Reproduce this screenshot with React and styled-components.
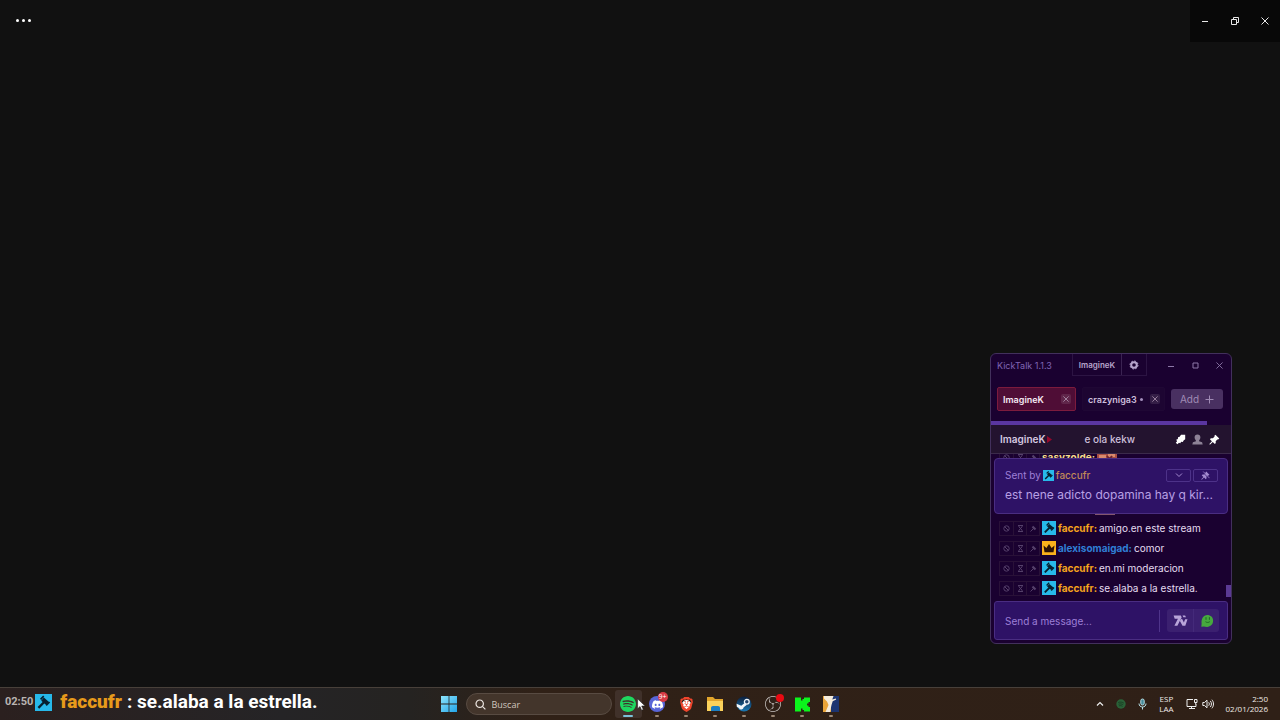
import React from "react";
import styled, { createGlobalStyle } from "styled-components";
import { SiSpotify, SiDiscord, SiBrave, SiObsstudio } from "react-icons/si";

const messages = [
  { user: "faccufr", color: "#f5a31c", badge: "mod", text: "amigo.en este stream" },
  { user: "alexisomaigad", color: "#2f7fd6", badge: "crown", text: "comor" },
  { user: "faccufr", color: "#f5a31c", badge: "mod", text: "en.mi moderacion" },
  { user: "faccufr", color: "#f5a31c", badge: "mod", text: "se.alaba a la estrella." },
];

const HammerBadge = ({ size }) => (
  <svg width={size} height={size} viewBox="0 0 14 14">
    <rect width="14" height="14" fill="#27b9ea" />
    <path d="m6.200 4.200 4.200 3.600" stroke="#06202f" strokeWidth="3.400" />
    <path d="m4.600 4.400 2.600-2.600M9.200 9.400l2.800-2.800" stroke="#06202f" strokeWidth="1.400" />
    <path d="m7.800 6.400-5 5" stroke="#06202f" strokeWidth="1.900" />
  </svg>
);

const CrownBadge = ({ size }) => (
  <svg width={size} height={size} viewBox="0 0 14 14">
    <rect width="14" height="14" fill="#fbb21c" />
    <path d="M1.500 4.500 4.400 7 7 3l2.600 4 2.900-2.500-1 6.700h-9z" fill="#2b1206" />
  </svg>
);

const GearIcon = () => (
  <svg width="10" height="10" viewBox="0 0 10 10">
    <circle cx="5" cy="5" r="2.8" fill="none" stroke="#b7a5cc" strokeWidth="2" />
    <circle cx="5" cy="5" r="4" fill="none" stroke="#b7a5cc" strokeWidth="1" strokeDasharray="1.7 1.4" />
  </svg>
);

const CloseIcon = ({ size = 6 }) => (
  <svg width={size} height={size} viewBox="0 0 8 8" fill="none" stroke="currentColor" strokeWidth="1">
    <path d="m.5.5 7 7M7.5.5l-7 7" />
  </svg>
);

const MinimizeIcon = () => (
  <svg width="8" height="8" viewBox="0 0 8 8" fill="none" stroke="currentColor">
    <path d="M1 4.5h6" />
  </svg>
);

const MaximizeIcon = () => (
  <svg width="7" height="7" viewBox="0 0 7 7" fill="none" stroke="currentColor">
    <path d="M1 1h5v5H1z" />
  </svg>
);

const RestoreIcon = () => (
  <svg width="8" height="8" viewBox="0 0 8 8" fill="none" stroke="currentColor">
    <path d="M.5 2.5h5v5h-5zM2.5 2V.5h5v5H6" />
  </svg>
);

const PlusIcon = () => (
  <svg width="9" height="9" viewBox="0 0 9 9" fill="none" stroke="currentColor">
    <path d="M4.5.5v8M.5 4.5h8" />
  </svg>
);

const BanIcon = () => (
  <svg width="7" height="7" viewBox="0 0 7 7" fill="none" stroke="currentColor">
    <circle cx="3.5" cy="3.5" r="2.7" />
    <path d="m1.7 1.7 3.6 3.6" />
  </svg>
);

const HourglassIcon = () => (
  <svg width="7" height="7" viewBox="0 0 7 7" fill="none" stroke="currentColor">
    <path d="M1 .5h5M1 6.5h5M2 .5v1.3l3 3.4v1.3M5 .5v1.3L2 5.2v1.3" />
  </svg>
);

const GavelIcon = () => (
  <svg width="7" height="7" viewBox="0 0 7 7" fill="none" stroke="currentColor">
    <path d="m2.500 1.500 3 3" strokeWidth="2.200" />
    <path d="m4 3-3.500 3.500" />
  </svg>
);

const PinIcon = ({ size, off }) => (
  <svg width={size} height={size} viewBox="0 0 12 12" fill="currentColor">
    <path d="M7 .8 11.2 5 10 6l-.9-.1-1.8 1.9.1 2-1 1.1-2.3-2.3L1 11.6l-.6-.6L3.200 7.900 1 5.600l1.100-1 2 .1L6 2.900 5.900 2z" />
    {off && <path d="m2 1 9 9.500" stroke="#35176f" strokeWidth="1.200" />}
    {off && <path d="m3 .7 8.300 8.800" stroke="currentColor" />}
  </svg>
);

const SpearIcon = () => (
  <svg width="11" height="11" viewBox="0 0 11 11" fill="#fff">
    <path d="M6 .8h4.200v4.400L8.600 6.600 7.800 8 6.200 7.800 5.200 9.300 4 8.700 2.400 10.300.8 8.700l1.300-1.500-.9-1.400 1.700-.9.1-1.600 1.700-.5z" />
  </svg>
);

const PersonIcon = () => (
  <svg width="11" height="11" viewBox="0 0 11 11" fill="#8d8296">
    <path d="M5.500.4c1.900 0 2.900 1.200 2.900 2.900 0 1.400-.6 2.500-1.300 3.100v.8l3 1.100.6 2.100H.3l.6-2.100 3-1.100v-.8C3.200 5.800 2.600 4.700 2.600 3.300 2.600 1.600 3.600.4 5.500.4z" />
  </svg>
);

const ChevronIcon = () => (
  <svg width="8" height="6" viewBox="0 0 8 6" fill="none" stroke="currentColor">
    <path d="m1 1.500 3 3 3-3" />
  </svg>
);

const SevenTvIcon = () => (
  <svg width="15" height="12" viewBox="0 0 15 12" fill="#b9a5d9">
    <path d="M.6.600h7.200l.9 1.700-4.300 8.500H1.400l3.500-7H1.700z" />
    <path d="M9.500.6h2.600l.9 1.700h-2.600zM7.600 4.600 9 3.800l1.900 3.700 1.200-3.200h2.400l-2.200 6.500H9.500L6.900 6z" />
  </svg>
);

const EmojiIcon = () => (
  <svg width="14" height="14" viewBox="0 0 14 14">
    <path d="M7.300.9c3.300 0 5.800 2.200 5.800 5.700 0 3.900-2.500 6.300-6 6.300-1.400 0-2.400-.3-3.200-.5l-2.600.4.300-3C1.100 4.500 3.400.9 7.300.9z" fill="#46a83e" />
    <path d="M6 3.200v2.600M9.400 3.200v2.600M5.500 7.700c1.300 1 3 1 4.300 0" fill="none" stroke="#1f6725" />
  </svg>
);

const EmoteIcon = () => (
  <svg width="20" height="20" viewBox="0 0 20 20">
    <rect width="20" height="20" fill="#a84f43" />
    <path d="M2 8h7v4H2zM11 4h7v6h-7z" fill="#d98a6c" />
    <path d="m10 9 4 5M15 9l-4 5" stroke="#6b2430" strokeWidth="2" />
    <path d="M0 18h20v2H0z" fill="#84566e" />
  </svg>
);

const WindowsIcon = () => (
  <svg width="16" height="16" viewBox="0 0 16 16">
    <defs>
      <linearGradient id="win" x1="0" y1="0" x2="1" y2="1">
        <stop offset="0" stopColor="#8de4fb" />
        <stop offset="1" stopColor="#22a5ea" />
      </linearGradient>
    </defs>
    <path d="M0 0h7.600v7.600H0zM8.400 0H16v7.600H8.400zM0 8.400h7.600V16H0zM8.400 8.400H16V16H8.400z" fill="url(#win)" />
  </svg>
);

const SearchIcon = () => (
  <svg width="11" height="11" viewBox="0 0 11 11" fill="none" stroke="#eee7e2" strokeWidth="1.200">
    <circle cx="4.700" cy="4.700" r="3.700" />
    <path d="m7.400 7.400 3 3" />
  </svg>
);

const FolderIcon = () => (
  <svg width="18" height="16" viewBox="0 0 18 16">
    <path d="M1 1h6l2 2h8v12H1z" fill="#e2a52c" />
    <path d="M1 5h16v10H1z" fill="#fbd25c" />
    <path d="M5 15v-3c0-1.200.8-2 2-2h5c1.200 0 2 .8 2 2v3z" fill="#1c7fc4" />
  </svg>
);

const SteamIcon = () => (
  <svg width="16" height="16" viewBox="0 0 16 16">
    <defs>
      <linearGradient id="steam" x1="0" y1="0" x2="0" y2="1">
        <stop offset="0" stopColor="#0c1f3d" />
        <stop offset="1" stopColor="#1b79b4" />
      </linearGradient>
    </defs>
    <circle cx="8" cy="8" r="7.500" fill="url(#steam)" />
    <path d="m.6 7.700 4.700 2 3-2.500 2.600 1.500-3.200 2.600a2.500 2.500 0 0 1-4.800.6L.8 10.700z" fill="#f2f6fa" />
    <circle cx="10.800" cy="5.800" r="2.400" fill="#23456c" stroke="#f2f6fa" strokeWidth="1.300" />
  </svg>
);

const KickIcon = () => (
  <svg width="17" height="15" viewBox="0 0 17 15">
    <path d="M1 .5h6v3h1.500V2H10V.5h6V5h-1.500v1.500H13v2h1.500V10H16v4.500h-6V13H8.500v-1.500H7v3H1z" fill="#0bf51c" />
  </svg>
);

const CounterStrikeIcon = () => (
  <svg width="16" height="16" viewBox="0 0 16 16">
    <rect width="16" height="16" fill="#e9a53a" />
    <path d="M8 0h8v16H8z" fill="#1c3470" />
    <path d="M1 0h9.500L9.300 3.400l3.500-1 .4 1.200-3.500 1.700L8.500 9 7 16H2.500L5.500 9 4 5.500 1 2.500z" fill="#f4ecdd" />
  </svg>
);

const CursorIcon = () => (
  <svg width="9" height="13" viewBox="0 0 9 13">
    <path d="M.6.8v10l2.400-2.200 1.600 3.700 1.700-.8-1.600-3.500h3.400z" fill="#fff" stroke="#222" strokeWidth=".6" />
  </svg>
);

const TrayUpIcon = () => (
  <svg width="8" height="6" viewBox="0 0 8 6" fill="none" stroke="#eee" strokeWidth="1.200">
    <path d="m1 4.500 3-3 3 3" />
  </svg>
);

const TrayGreenIcon = () => (
  <svg width="10" height="10" viewBox="0 0 10 10">
    <circle cx="5" cy="5" r="4.700" fill="#2a6238" />
    <path d="M2.200 3.500c2-.8 4.200-.4 5.600.6M2.500 5.200c1.700-.6 3.400-.3 4.700.5M2.800 6.900c1.400-.5 2.700-.2 3.800.4" fill="none" stroke="#14301b" strokeWidth=".7" />
  </svg>
);

const MicIcon = () => (
  <svg width="9" height="12" viewBox="0 0 9 12" fill="none" stroke="#b8dfe5">
    <rect x="2.800" y="1" width="3.400" height="6" rx="1.700" fill="#438a9a" />
    <path d="M1 5.500C1 7.700 2.500 9 4.500 9S8 7.700 8 5.500M4.500 9v2.500" />
  </svg>
);

const NetworkIcon = () => (
  <svg width="12" height="12" viewBox="0 0 12 12" fill="none" stroke="#eee">
    <path d="M7 1.500H1v7h9V6M3 10.500h6M5.500 8.500v2M8.500 1.500h2.500v3H8.500zM9.700 4.500v2" />
  </svg>
);

const SpeakerIcon = () => (
  <svg width="12" height="10" viewBox="0 0 12 10" fill="none" stroke="#eee">
    <path d="M.8 3.500h1.700L5 1.200v7.600L2.500 6.500H.8zM6.700 3.300c.8 1 .8 2.400 0 3.400M8.300 1.900c1.500 1.800 1.500 4.400 0 6.200M9.900.7c2.100 2.400 2.100 6.200 0 8.600" />
  </svg>
);

const ModTools = () => (
  <ModButtons>
    <button type="button" aria-label="Ban"><BanIcon /></button>
    <button type="button" aria-label="Timeout"><HourglassIcon /></button>
    <button type="button" aria-label="Moderate"><GavelIcon /></button>
  </ModButtons>
);

const KickTalk = () => (
  <ChatWindow>
    <TitleBar>
      <AppName>KickTalk 1.1.3</AppName>
      <TitleGroup>
        <button type="button">ImagineK</button>
        <button type="button" aria-label="Settings"><GearIcon /></button>
      </TitleGroup>
      <WindowButtons>
        <button type="button" aria-label="Minimize"><MinimizeIcon /></button>
        <button type="button" aria-label="Maximize"><MaximizeIcon /></button>
        <button type="button" aria-label="Close"><CloseIcon size={7} /></button>
      </WindowButtons>
    </TitleBar>
    <Tabs>
      <Tab $active>
        <button type="button">ImagineK</button>
        <TabClose type="button" aria-label="Close ImagineK"><CloseIcon /></TabClose>
      </Tab>
      <Tab>
        <button type="button">crazyniga3 <i /></button>
        <TabClose type="button" aria-label="Close crazyniga3"><CloseIcon /></TabClose>
      </Tab>
      <AddButton type="button">Add <PlusIcon /></AddButton>
    </Tabs>
    <TabScroll><span /></TabScroll>
    <StreamHeader>
      <h2>ImagineK</h2>
      <LiveDot viewBox="0 0 5 7"><path d="M0 0 5 3.500 0 7z" fill="#94082b" /></LiveDot>
      <p>e ola kekw</p>
      <SpearIcon />
      <PersonIcon />
      <PinIcon size={11} />
    </StreamHeader>
    <Chat>
      <Message>
        <ModTools />
        <Name $color="#f3dc8c">sasyzolde:</Name>
        <EmoteIcon />
      </Message>
      <EmoteMessage><EmoteIcon /></EmoteMessage>
      {messages.map((m, i) => (
        <Message key={i}>
          <ModTools />
          {m.badge === "mod" ? <HammerBadge size={14} /> : <CrownBadge size={14} />}
          <Name $color={m.color}>{m.user}:</Name>
          <span>{m.text}</span>
        </Message>
      ))}
      <ScrollThumb />
      <Pinned>
        <PinnedTop>
          <span>Sent by</span>
          <HammerBadge size={11} />
          <strong>faccufr</strong>
          <SmallButton type="button" aria-label="Expand"><ChevronIcon /></SmallButton>
          <SmallButton type="button" aria-label="Unpin"><PinIcon size={9} off /></SmallButton>
        </PinnedTop>
        <p>est nene adicto dopamina hay q kir...</p>
      </Pinned>
    </Chat>
    <Composer>
      <input type="text" aria-label="Message" placeholder="Send a message..." />
      <EmoteButtons>
        <button type="button" aria-label="7TV emotes"><SevenTvIcon /></button>
        <button type="button" aria-label="Kick emotes"><EmojiIcon /></button>
      </EmoteButtons>
    </Composer>
  </ChatWindow>
);

const App = () => {
  return (
    <Desktop>
      <GlobalStyle />
      <TopBar>
        <MoreButton type="button" aria-label="More"><i /><i /><i /></MoreButton>
        <Controls>
          <button type="button" aria-label="Minimize"><MinimizeIcon /></button>
          <button type="button" aria-label="Restore"><RestoreIcon /></button>
          <button type="button" aria-label="Close"><CloseIcon size={8} /></button>
        </Controls>
      </TopBar>
      <KickTalk />
      <Taskbar>
        <Overlay>
          <time>02:50</time>
          <HammerBadge size={17} />
          <b>faccufr</b>
          <span>: se.alaba a la estrella.</span>
        </Overlay>
        <Apps>
          <StartButton type="button" aria-label="Start"><WindowsIcon /></StartButton>
          <Search>
            <SearchIcon />
            <input type="text" aria-label="Buscar" placeholder="Buscar" />
          </Search>
          <AppButton type="button" aria-label="Spotify" $active>
            <SiSpotify size={16} color="#1ed760" />
            <Cursor><CursorIcon /></Cursor>
          </AppButton>
          <AppButton type="button" aria-label="Discord">
            <DiscordTile><SiDiscord size={11} color="#fff" /></DiscordTile>
            <Badge>9+</Badge>
          </AppButton>
          <AppButton type="button" aria-label="Brave">
            <BraveTile><SiBrave size={15} color="#f0452c" /></BraveTile>
          </AppButton>
          <AppButton type="button" aria-label="Archivos"><FolderIcon /></AppButton>
          <AppButton type="button" aria-label="Steam"><SteamIcon /></AppButton>
          <AppButton type="button" aria-label="OBS">
            <SiObsstudio size={16} color="#c9c5c3" />
            <RecordDot />
          </AppButton>
          <AppButton type="button" aria-label="Kick"><KickIcon /></AppButton>
          <AppButton type="button" aria-label="Counter-Strike 2"><CounterStrikeIcon /></AppButton>
        </Apps>
        <Tray>
          <TrayUpIcon />
          <TrayGreenIcon />
          <MicIcon />
          <Language>ESP<br />LAA</Language>
          <Sound><NetworkIcon /><SpeakerIcon /></Sound>
          <Clock>2:50<br />02/01/2026</Clock>
        </Tray>
      </Taskbar>
    </Desktop>
  );
};

const GlobalStyle = createGlobalStyle`
  * {
    box-sizing: border-box;
    margin: 0;
    padding: 0;
  }
  body {
    background: #111111;
    font-family: Inter, "Liberation Sans", sans-serif;
  }
  button, input {
    font: inherit;
    color: inherit;
    background: none;
    border: none;
    outline: none;
  }
  button {
    display: flex;
    align-items: center;
    justify-content: center;
  }
  svg {
    flex-shrink: 0;
    display: block;
  }
`;

const Desktop = styled.main`
  position: relative;
  display: flex;
  flex-direction: column;
  justify-content: space-between;
  min-height: 100vh;
  overflow: hidden;
`;

const TopBar = styled.header`
  display: flex;
  justify-content: space-between;
  align-items: flex-start;
`;

const MoreButton = styled.button`
  gap: 3px;
  height: 41px;
  padding: 0 16px;
  i {
    width: 3px;
    height: 3px;
    border-radius: 50%;
    background: #fff;
  }
`;

const Controls = styled.div`
  display: flex;
  height: 42px;
  background: #080808;
  color: #e8e8e8;
  button {
    width: 30px;
    height: 41px;
  }
`;

const ChatWindow = styled.section`
  position: absolute;
  right: 48px;
  bottom: 76px;
  display: flex;
  flex-direction: column;
  width: 242px;
  border: 1px solid #42305c;
  border-radius: 6px;
  overflow: hidden;
  background: #1a0130;
  color: #d9cce8;
  font-size: 10px;
`;

const TitleBar = styled.div`
  display: flex;
  align-items: flex-start;
  height: 33px;
`;

const AppName = styled.h1`
  flex: 1;
  padding-left: 6px;
  font-size: 9px;
  font-weight: 400;
  line-height: 23px;
  color: #8065b4;
`;

const TitleGroup = styled.div`
  display: flex;
  height: 22px;
  border: 1px solid #2c1443;
  border-top: none;
  color: #b7a5cc;
  font-size: 8px;
  font-weight: 600;
  button {
    width: 24px;
  }
  button:first-child {
    width: 49px;
    border-right: 1px solid #3a2351;
  }
`;

const WindowButtons = styled.div`
  display: flex;
  padding-left: 12px;
  color: #8d78a8;
  button {
    width: 24px;
    height: 23px;
  }
`;

const Tabs = styled.nav`
  display: flex;
  align-items: center;
  gap: 6px;
  padding: 0 8px 0 6px;
  height: 24px;
`;

const Tab = styled.div`
  display: flex;
  flex: ${({ $active }) => ($active ? "0 0 79px" : "1")};
  align-items: center;
  justify-content: space-between;
  height: 24px;
  padding: 0 4px 0 5px;
  border: 1px solid ${({ $active }) => ($active ? "#7c1b3d" : "#1f0734")};
  border-radius: 2px;
  background: ${({ $active }) => ($active ? "#4f0d36" : "#1d0532")};
  color: ${({ $active }) => ($active ? "#f5e8f2" : "#cdbfdb")};
  font-weight: 600;
  font-size: 9px;
  i {
    width: 3px;
    height: 3px;
    margin-left: 3px;
    border-radius: 50%;
    background: #a48fbd;
  }
`;

const TabClose = styled.button`
  width: 10px;
  height: 10px;
  border-radius: 2px;
  background: rgba(255, 255, 255, 0.1);
  color: #b79cb8;
`;

const AddButton = styled.button`
  gap: 6px;
  width: 52px;
  height: 20px;
  border-radius: 3px;
  background: #493061;
  color: #a08bb5;
  font-size: 10px;
`;

const TabScroll = styled.div`
  height: 14px;
  padding-top: 10px;
  span {
    display: block;
    width: 90%;
    height: 4px;
    background: #5a36a0;
  }
`;

const StreamHeader = styled.div`
  display: flex;
  align-items: center;
  gap: 6px;
  height: 29px;
  padding: 0 11px 0 9px;
  background: #23132f;
  border-bottom: 1px solid #3b2a4b;
  font-size: 10px;
  color: #fff;
  h2 {
    font-size: 10px;
    font-weight: 600;
    color: #d6c9e0;
  }
  p {
    flex: 1;
    padding-left: 26px;
    font-weight: 500;
    color: #cdbfdb;
  }
`;

const LiveDot = styled.svg`
  width: 5px;
  height: 7px;
  margin-left: -4px;
`;

const Chat = styled.div`
  position: relative;
  display: flex;
  flex-direction: column;
  justify-content: flex-end;
  height: 146px;
  padding: 0 8px 2px;
  overflow: hidden;
`;

const Message = styled.div`
  display: flex;
  flex-shrink: 0;
  align-items: center;
  gap: 2px;
  height: 20px;
  color: #e5dcf0;
  font-size: 10px;
  white-space: nowrap;
`;

const EmoteMessage = styled.div`
  display: flex;
  flex-shrink: 0;
  align-items: flex-end;
  height: 51px;
  padding: 0 0 3px 96px;
`;

const Name = styled.b`
  color: ${({ $color }) => $color};
  font-weight: 700;
`;

const ModButtons = styled.div`
  display: flex;
  border: 1px solid #291138;
  color: #55406a;
  button {
    width: 13px;
    height: 13px;
  }
  button + button {
    border-left: 1px solid #291138;
  }
`;

const ScrollThumb = styled.div`
  position: absolute;
  right: 0;
  bottom: 3px;
  width: 5px;
  height: 12px;
  background: #5b3a94;
`;

const Pinned = styled.aside`
  position: absolute;
  top: 4px;
  left: 3px;
  right: 3px;
  height: 56px;
  padding: 9px 9px 0 10px;
  border: 1px solid #4a2d82;
  border-radius: 4px;
  background: #2e1266;
  p {
    margin-top: 5px;
    white-space: nowrap;
    font-size: 12px;
    line-height: 16px;
    color: #b8a0e4;
  }
`;

const PinnedTop = styled.div`
  display: flex;
  align-items: center;
  gap: 2px;
  height: 14px;
  color: #9d7fd6;
  strong {
    flex: 1;
    font-weight: 500;
    color: #c08858;
  }
`;

const SmallButton = styled.button`
  width: 25px;
  height: 13px;
  border: 1px solid #4d3289;
  border-radius: 2px;
  color: #a48bd0;
`;

const Composer = styled.form`
  display: flex;
  align-items: center;
  gap: 7px;
  height: 39px;
  margin: 1px 3px 3px;
  padding: 0 8px 0 10px;
  border: 1px solid #4a2d82;
  border-radius: 3px;
  background: #2e1266;
  input {
    flex: 1;
    min-width: 0;
    height: 22px;
    border-right: 1px solid #4f348b;
    font-size: 10px;
    color: #b8a0e4;
  }
  input::placeholder {
    color: #9d7fd6;
  }
`;

const EmoteButtons = styled.div`
  display: flex;
  height: 23px;
  border-radius: 3px;
  background: #3b2070;
  button {
    width: 26px;
  }
  button + button {
    border-left: 1px solid #442a7a;
  }
`;

const Taskbar = styled.footer`
  display: grid;
  grid-template-columns: 1fr auto 1fr;
  align-items: center;
  height: 33px;
  border-top: 1px solid #48403a;
  background: linear-gradient(90deg, #2b201f 0, #252426 22%, #252321 32%, #302117 42%, #2f2017 100%);
  font-family: "Open Sans", "Noto Sans", sans-serif;
`;

const Overlay = styled.div`
  display: flex;
  align-items: center;
  padding: 0 0 4px 5px;
  font-family: Roboto, sans-serif;
  font-size: 19px;
  font-weight: 700;
  line-height: 24px;
  color: #fff;
  white-space: nowrap;
  time {
    margin-right: 2px;
    font-size: 11px;
    color: #b9b4b1;
  }
  b {
    margin: 0 5px 0 8px;
    color: #e79a1b;
  }
`;

const Apps = styled.div`
  display: flex;
  align-items: center;
  padding-right: 2px;
`;

const StartButton = styled.button`
  width: 32px;
  height: 32px;
`;

const Search = styled.label`
  display: flex;
  align-items: center;
  gap: 6px;
  width: 146px;
  height: 22px;
  margin: 0 2px 0 1px;
  padding: 0 8px;
  border: 1px solid #584b42;
  border-radius: 11px;
  background: #43352b;
  color: #d9d0c9;
  font-size: 9px;
  input {
    min-width: 0;
    width: 100%;
  }
  input::placeholder {
    color: #d0c6bf;
  }
`;

const AppButton = styled.button`
  position: relative;
  width: 27px;
  height: 28px;
  margin: 0 1px;
  border-radius: 3px;
  background: ${({ $active }) => ($active ? "#40312a" : "transparent")};
  &::after {
    content: "";
    position: absolute;
    bottom: 1px;
    left: 50%;
    width: ${({ $active }) => ($active ? "10px" : "4px")};
    height: 2px;
    border-radius: 1px;
    background: ${({ $active }) => ($active ? "#7cc0d8" : "#9a8674")};
    transform: translateX(-50%);
  }
`;

const Cursor = styled.span`
  position: absolute;
  left: 22px;
  top: 8px;
  z-index: 2;
`;

const DiscordTile = styled.span`
  display: grid;
  place-items: center;
  width: 16px;
  height: 16px;
  border-radius: 50%;
  background: #5865d8;
`;

const BraveTile = styled.span`
  background: radial-gradient(circle, #fff 0 4px, transparent 5px);
`;

const Badge = styled.span`
  position: absolute;
  top: 2px;
  right: 3px;
  width: 10px;
  height: 10px;
  border-radius: 50%;
  background: #d83a45;
  color: #fff;
  font-size: 7px;
  line-height: 10px;
`;

const RecordDot = styled.span`
  position: absolute;
  top: 4px;
  right: 3px;
  width: 8px;
  height: 8px;
  border-radius: 50%;
  background: #ea0a12;
`;

const Tray = styled.div`
  display: flex;
  align-items: center;
  justify-content: flex-end;
  gap: 12px;
  padding-right: 12px;
  color: #f0ebe7;
  font-size: 8px;
  line-height: 10px;
`;

const Language = styled.span`
  text-align: center;
`;

const Sound = styled.span`
  display: flex;
  align-items: center;
  gap: 4px;
`;

const Clock = styled.time`
  text-align: right;
`;

export default App;
